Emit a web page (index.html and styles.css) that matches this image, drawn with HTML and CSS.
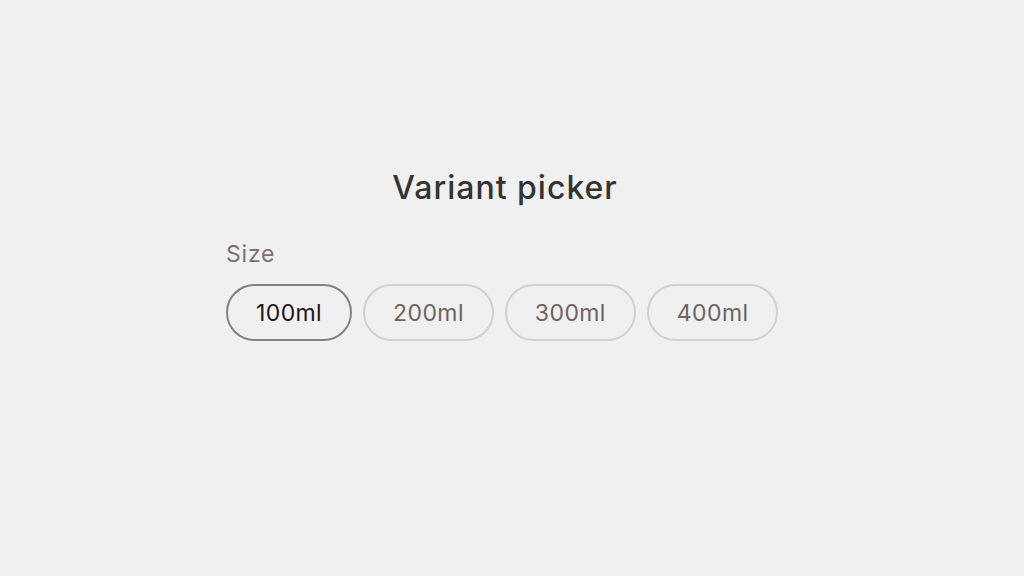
FILE: index.html
```html
<!DOCTYPE html>
<html lang="en">
<head>
    <meta charset="UTF-8">
    <meta name="viewport" content="width=device-width, initial-scale=1.0">
    <title>Variant picker</title>
    <link rel="stylesheet" href="styles.css">
</head>
<body>
    <main class="page">
        <section class="picker">
            <h1>Variant picker</h1>
            <div class="option-group">
                <span class="option-label">Size</span>
                <div class="options">
                    <button class="pill selected">100ml</button>
                    <button class="pill">200ml</button>
                    <button class="pill">300ml</button>
                    <button class="pill">400ml</button>
                </div>
            </div>
        </section>
    </main>
</body>
</html>
```

FILE: styles.css
```css
* {
    margin: 0;
    padding: 0;
    box-sizing: border-box;
}

body {
    font-family: Inter, "Noto Sans", sans-serif;
    background-color: #f0f0f0;
}

.page {
    min-height: 100vh;
    display: flex;
    justify-content: center;
}

.picker {
    width: 572px;
    padding-top: 168px;
    display: flex;
    flex-direction: column;
}

.picker h1 {
    text-align: center;
    padding-right: 14px;
    font-size: 32px;
    font-weight: 500;
    letter-spacing: 1px;
    color: #333333;
    line-height: 40px;
    margin-bottom: 31px;
}

.option-label {
    display: block;
    font-size: 23px;
    letter-spacing: 0.8px;
    color: #7a7371;
    line-height: 30px;
    margin-bottom: 15px;
}

.options {
    display: flex;
    gap: 11px;
}

.pill {
    height: 57px;
    padding: 0 28px;
    border: 2px solid #d3d0cf;
    border-radius: 29px;
    background: transparent;
    font-family: inherit;
    font-size: 23px;
    letter-spacing: 0.4px;
    color: #6b6462;
    cursor: pointer;
}

.pill.selected {
    border-color: #858181;
    color: #1c1616;
}
```
